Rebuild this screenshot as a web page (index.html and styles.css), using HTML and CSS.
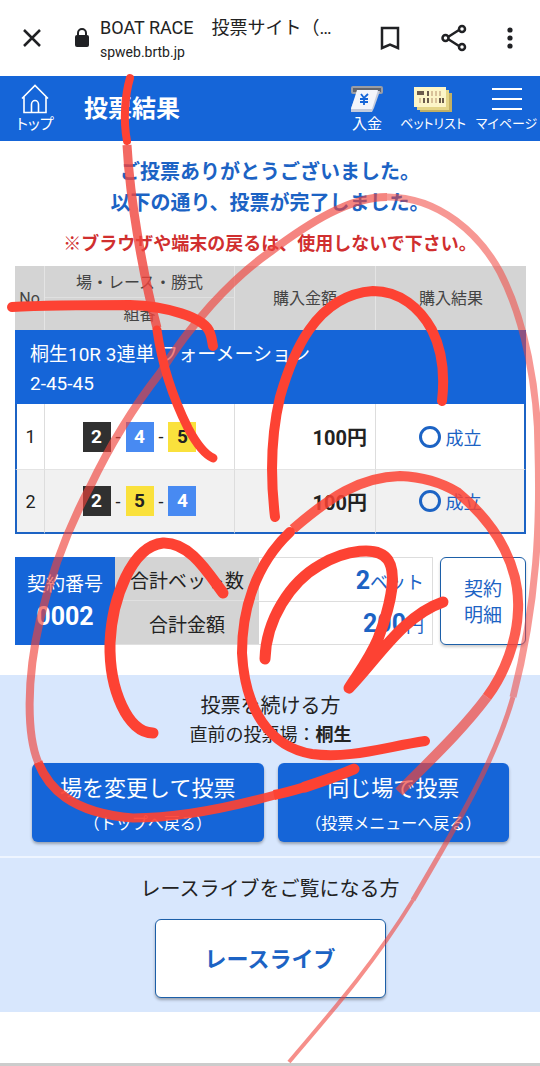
FILE: index.html
```html
<!DOCTYPE html>
<html lang="ja">
<head>
  <meta charset="UTF-8" />
  <meta name="viewport" content="width=device-width, initial-scale=1.0"/>
  <title>BOAT RACE 投票サイト</title>
  <link rel="stylesheet" href="styles.css">
</head>
<body>
  <div class="browser-bar">
    <button class="bar-btn" aria-label="閉じる">
      <svg width="20" height="20" viewBox="0 0 20 20"><path d="M2 2L18 18M18 2L2 18"/></svg>
    </button>
    <svg class="lock" width="16" height="20" viewBox="0 0 16 20">
      <path d="M4 8V5a4 4 0 0 1 8 0v3" fill="none" stroke="#202124" stroke-width="2"/>
      <rect x="1" y="7" width="14" height="12" rx="2" fill="#202124"/>
    </svg>
    <div class="address">
      <div class="page-name">BOAT RACE　投票サイト（…</div>
      <div class="page-url">spweb.brtb.jp</div>
    </div>
    <button class="bar-btn" aria-label="ブックマーク">
      <svg width="20" height="24" viewBox="0 0 20 24"><path d="M2 2H18V22L10 18.500L2 22Z"/></svg>
    </button>
    <button class="bar-btn" aria-label="共有">
      <svg width="26" height="28" viewBox="0 0 26 28"><path d="M7 13L18 6M7 15L18 22"/><circle cx="4.500" cy="14" r="3"/><circle cx="21" cy="5" r="3"/><circle cx="21" cy="23" r="3"/></svg>
    </button>
    <button class="bar-btn dots" aria-label="メニュー">
      <svg width="6" height="22" viewBox="0 0 6 22"><circle cx="3" cy="3" r="2.600"/><circle cx="3" cy="11" r="2.600"/><circle cx="3" cy="19" r="2.600"/></svg>
    </button>
  </div>

  <header class="site-header">
    <a class="nav-item home" href="#">
      <svg width="28" height="30" viewBox="0 0 28 30"><path d="M1 14.500L14 1.500L27 14.500M3 12.500V28.500H25V12.500M10.500 28.500V20.500a3.500 4 0 0 1 7 0V28.500" fill="none" stroke="#fff" stroke-width="1.600"/></svg>
      <span>トップ</span>
    </a>
    <h1 class="site-title">投票結果</h1>
    <a class="nav-item pay" href="#">
      <svg width="34" height="30" viewBox="0 0 34 30">
        <rect x="1" y="2" width="32" height="8" rx="2" fill="#9a9da5"/>
        <rect x="3" y="4" width="28" height="4" fill="#62656e"/>
        <path d="M8 7H30L24 24L22 28H1V24Z" fill="#c4cbdc"/>
        <path d="M7 6H28L22 25H1Z" fill="#f3f5fb"/>
        <path d="M11 10L14 14L18 10M14 14V21M10 15H18M10 18H18" fill="none" stroke="#1565d8" stroke-width="1.800"/>
      </svg>
      <span>入金</span>
    </a>
    <a class="nav-item bets" href="#">
      <svg width="40" height="30" viewBox="0 0 40 30">
        <rect x="7" y="9" width="32" height="19" fill="#c3b063"/>
        <rect x="4" y="6" width="32" height="20" fill="#e4d588"/>
        <rect x="1" y="3" width="32" height="20" fill="#fcf5c8"/>
        <path d="M4 9H11" stroke="#6b5b4c" stroke-width="4"/>
        <path d="M15 7V12M27 14V19M30 14V19M11 14V19M15 14V19" stroke="#6b5b4c" stroke-width="2"/>
        <path d="M19 7V12M23 7V12M27 7V12M7 14V19M19 14V19M23 14V19" stroke="#d9c29a" stroke-width="2"/>
      </svg>
      <span>ベットリスト</span>
    </a>
    <a class="nav-item mypage" href="#">
      <svg width="32" height="30" viewBox="0 0 32 30"><path d="M1 5H31M1 15H31M1 25H31" stroke="#fff" stroke-width="2"/></svg>
      <span>マイページ</span>
    </a>
  </header>

  <main>
    <div class="thanks">
      <p>ご投票ありがとうございました。</p>
      <p>以下の通り、投票が完了しました。</p>
    </div>
    <p class="caution">※ブラウザや端末の戻るは、使用しないで下さい。</p>

    <table class="result">
      <colgroup><col class="col-no"><col class="col-race"><col class="col-price"><col></colgroup>
      <thead>
        <tr><th rowspan="2">No</th><th class="race">場・レース・勝式</th><th rowspan="2">購入金額</th><th rowspan="2">購入結果</th></tr>
        <tr><th class="kumi">組番</th></tr>
      </thead>
      <tbody>
        <tr><td class="bet-name" colspan="4">桐生10R 3連単 フォーメーション<br>2-45-45</td></tr>
        <tr class="bet">
          <td>1</td>
          <td><div class="combo"><b class="boat b2">2</b>-<b class="boat b4">4</b>-<b class="boat b5">5</b></div></td>
          <td class="price">100円</td>
          <td><div class="status"><i class="ring"></i>成立</div></td>
        </tr>
        <tr class="bet even">
          <td>2</td>
          <td><div class="combo"><b class="boat b2">2</b>-<b class="boat b5">5</b>-<b class="boat b4">4</b></div></td>
          <td class="price">100円</td>
          <td><div class="status"><i class="ring"></i>成立</div></td>
        </tr>
      </tbody>
    </table>

    <div class="summary">
      <div class="contract">契約番号<strong>0002</strong></div>
      <table class="totals">
        <tr><th>合計ベット数</th><td><strong>2</strong>ベット</td></tr>
        <tr><th>合計金額</th><td><strong>200</strong>円</td></tr>
      </table>
      <button class="detail">契約<br>明細</button>
    </div>

    <section class="panel again">
      <h2>投票を続ける方</h2>
      <p>直前の投票場：<b>桐生</b></p>
      <div class="actions">
        <button class="vote">場を変更して投票<small>（トップへ戻る）</small></button>
        <button class="vote">同じ場で投票<small>（投票メニューへ戻る）</small></button>
      </div>
    </section>

    <section class="panel live">
      <h2>レースライブをご覧になる方</h2>
      <button class="live-btn">レースライブ</button>
    </section>
  </main>
  <div class="bottom-edge"></div>

  <!-- red pen marks -->
  <svg class="pen" viewBox="0 0 540 1066">
    <!-- large loop -->
    <g class="faint">
      <path stroke-width="8" opacity=".65" d="M38 762C27 735 26 680 40 620C52 570 67 530 90 487C110 445 135 405 160 373C190 325 230 280 270 252C310 222 350 197 387 197"/>
      <path stroke-width="7" opacity=".55" d="M387 197C440 197 480 235 500 272C525 320 538 390 538 450C540 520 538 600 513 697"/>
      <path stroke-width="5" opacity=".6" d="M513 697C495 760 460 820 413 900"/>
      <path stroke-width="4" opacity=".6" d="M413 900C370 970 320 1025 289 1062"/>
    </g>
    <path class="flat" stroke-width="9" opacity=".92" d="M38 762C48 787 70 813 133 818C180 818 235 806 275 795"/>
    <path class="flat" stroke-width="10" d="M274 795C285 793 295 790 305 787"/>
    <path stroke-width="11" d="M305 787C320 782 338 776 354 769"/>
    <!-- long stroke through the title -->
    <path stroke-width="8" d="M130 78C125 95 123 120 127 141"/>
    <g class="faint"><path stroke-width="9" opacity=".8" d="M127 145C130 200 143 275 157 328"/></g>
    <path stroke-width="9" d="M157 330C162 365 174 400 188 428C196 443 204 454 213 458"/>
    <path stroke-width="10" d="M12 307C50 305 90 305 130 305C165 306 205 317 210 333C212 338 212 342 213 346"/>
    <!-- arch -->
    <path stroke-width="10" d="M275 517C270 475 271 435 280 397C292 355 315 295 373 291C400 291 420 308 432 330C443 352 445 375 442 401"/>
    <!-- small C -->
    <path stroke-width="11" d="M223 593C208 573 190 542 163 543C132 546 112 598 110 643C109 690 128 733 153 733"/>
    <!-- right circle -->
    <g class="faint"><path stroke-width="10" opacity=".7" d="M399 792C425 765 460 733 487 697"/></g>
    <path class="flat" stroke-width="10" opacity=".85" d="M487 697C505 673 517 640 518 610C520 570 500 527 457 492C442 483 425 477 400 476C360 477 330 497 293 529"/>
    <path stroke-width="10" d="M290 532C255 565 242 610 242 653C245 710 270 747 312 754C350 759 385 747 425 741"/>
    <!-- 2 -->
    <path stroke-width="11" d="M265 659C266 620 290 582 320 565C345 550 378 545 388 560C398 575 389 610 378 639C370 658 360 671 349 688C375 662 402 616 443 602"/>
  </svg>
</body>
</html>
```
FILE: styles.css
```css
* {
  box-sizing: border-box;
}

body {
  margin: 0;
  min-height: 100vh;
  display: flex;
  flex-direction: column;
  position: relative;
  background: #fff;
  color: #222;
  font-family: Roboto, "Noto Sans CJK JP", sans-serif;
  overflow-x: hidden;
}

h1, h2, p {
  margin: 0;
}

button {
  font-family: inherit;
  padding: 0;
  cursor: pointer;
}

/* browser bar */
.browser-bar {
  display: flex;
  align-items: center;
  height: 76px;
  padding: 0 12px 0 10px;
}

.bar-btn {
  display: flex;
  justify-content: center;
  width: 44px;
  margin-right: 20px;
  border: 0;
  background: none;
}

.bar-btn svg {
  fill: none;
  stroke: #202124;
  stroke-width: 2.5;
}

.bar-btn.dots {
  width: 8px;
  margin: 0 14px 0 10px;
}

.bar-btn.dots svg {
  fill: #202124;
  stroke: none;
}

.lock {
  margin-right: 10px;
}

.address {
  flex: 1;
  min-width: 0;
  padding-top: 2px;
  white-space: nowrap;
}

.page-name {
  font-size: 18px;
  line-height: 26px;
}

.page-url {
  font-size: 14px;
  line-height: 22px;
}

/* site header */
.site-header {
  display: flex;
  align-items: center;
  height: 65px;
  background: #1565d8;
  color: #fff;
}

.nav-item {
  display: flex;
  flex-direction: column;
  align-items: center;
  color: #fff;
  font-size: 15px;
  line-height: 20px;
  text-decoration: none;
  white-space: nowrap;
  font-feature-settings: "palt";
}

.home {
  width: 70px;
}

.pay {
  width: 52px;
}

.bets {
  width: 80px;
}

.mypage {
  width: 67px;
}

.bets, .mypage {
  font-size: 13px;
}

.site-title {
  flex: 1;
  padding-left: 14px;
  font-size: 24px;
  line-height: 32px;
}

/* messages */
.thanks {
  padding-top: 16px;
  color: #1c63c4;
  font-size: 20px;
  font-weight: bold;
  line-height: 31px;
  text-align: center;
}

.caution {
  padding: 12px 0 10px;
  color: #d02f2f;
  font-size: 18px;
  font-weight: bold;
  line-height: 25px;
  text-align: center;
  white-space: nowrap;
}

/* result table */
.result {
  width: calc(100% - 29px);
  margin: 0 14px 0 15px;
  border-spacing: 0;
  table-layout: fixed;
}

.col-no {
  width: 30px;
}

.col-race {
  width: 190px;
}

.col-price {
  width: 141px;
}

.result th {
  height: 32px;
  padding: 2px 0 0;
  border-right: 1px solid #e4e4e4;
  background: #d4d4d4;
  color: #444;
  font-size: 16px;
  font-weight: normal;
  line-height: 24px;
}

.result th.race {
  border-bottom: 1px solid #e0e0e0;
}

.result th:last-child:not(.kumi) {
  border-right: 0;
}

.result td {
  padding: 0;
  border-right: 1px solid #ddd;
  text-align: center;
  font-size: 18px;
}

.result .bet-name {
  height: 74px;
  padding: 4px 15px 0;
  border: 0;
  background: #1565d8;
  color: #fff;
  font-size: 19px;
  line-height: 29px;
  text-align: left;
}

.bet td {
  height: 65px;
}

.bet td:first-child {
  border-left: 2px solid #1c63c4;
}

.bet td:last-child {
  border-right: 2px solid #1c63c4;
}

.even td {
  background: #f1f1f1;
  border-top: 1px solid #e4e4e4;
  border-bottom: 2px solid #1c63c4;
}

.combo, .status {
  display: flex;
  align-items: center;
  justify-content: center;
  gap: 5px;
}

.boat {
  width: 28px;
  height: 30px;
  font-size: 19px;
  line-height: 30px;
}

.b2 {
  background: #303030;
  color: #fff;
}

.b4 {
  background: #488af2;
  color: #fff;
}

.b5 {
  background: #fae13c;
}

.result .price {
  padding-right: 8px;
  font-size: 20px;
  font-weight: bold;
  text-align: right;
}

.status {
  color: #1c63c4;
}

.ring {
  width: 22px;
  height: 22px;
  border: 3px solid #1c63c4;
  border-radius: 50%;
}

/* totals */
.summary {
  display: flex;
  margin: 23px 14px 30px 15px;
  font-size: 19px;
}

.contract {
  display: flex;
  flex-direction: column;
  justify-content: center;
  width: 100px;
  background: #1565d8;
  color: #fff;
  line-height: 32px;
  text-align: center;
}

.contract strong, .totals strong {
  font-size: 25px;
}

.totals {
  flex: 1;
  border-spacing: 0;
  font-size: 19px;
}

.totals th {
  width: 144px;
  padding: 2px 0 0;
  border-bottom: 1px solid #e0e0e0;
  background: #d4d4d4;
  font-weight: normal;
}

.totals td {
  height: 44px;
  padding: 4px 8px 0 0;
  border: 1px solid #ddd;
  border-left: 0;
  color: #1c63c4;
  font-size: 18px;
  line-height: 30px;
  text-align: right;
}

.totals tr:first-child td {
  border-bottom: 0;
}

.detail {
  width: 86px;
  padding-top: 3px;
  margin-left: 7px;
  border: 1px solid #1c5fa8;
  border-radius: 6px;
  background: #fff;
  box-shadow: 0 2px 3px rgba(0, 0, 0, 0.2);
  color: #1c63c4;
  font-size: 19px;
  line-height: 26px;
}

/* panels */
.panel {
  display: flex;
  flex-direction: column;
  align-items: center;
  background: #d8e7fd;
}

.panel h2 {
  font-size: 20px;
  font-weight: normal;
  line-height: 30px;
}

.again {
  padding: 16px 31px 14px 32px;
  border-bottom: 2px solid #eef5ff;
}

.again p {
  font-size: 18px;
  line-height: 28px;
}

.actions {
  display: flex;
  gap: 14px;
  width: 100%;
  margin-top: 14px;
}

.vote, .live-btn {
  height: 79px;
  border: 0;
  border-radius: 6px;
  box-shadow: 0 2px 3px rgba(0, 0, 0, 0.3);
  font-size: 22px;
}

.vote {
  flex: 1;
  padding-top: 6px;
  background: #1565d8;
  color: #fff;
  line-height: 35px;
}

.vote small {
  display: block;
  font-size: 16px;
}

.live {
  padding: 16px 0 14px;
}

.live-btn {
  width: 231px;
  margin-top: 15px;
  padding-bottom: 4px;
  border: 1px solid #1c5fa8;
  background: #fff;
  color: #1c63c4;
  font-weight: bold;
}

.bottom-edge {
  height: 3px;
  margin-top: auto;
  background: #ccc;
}

/* pen marks lie over the whole page */
.pen {
  position: absolute;
  top: 0;
  left: 0;
  width: 100%;
  pointer-events: none;
}

.pen path {
  fill: none;
  stroke: #fd4233;
  stroke-linecap: round;
  stroke-linejoin: round;
}

.pen .flat {
  stroke-linecap: butt;
}

.pen .faint path {
  stroke: #f0443c;
  stroke-linecap: butt;
}
```
